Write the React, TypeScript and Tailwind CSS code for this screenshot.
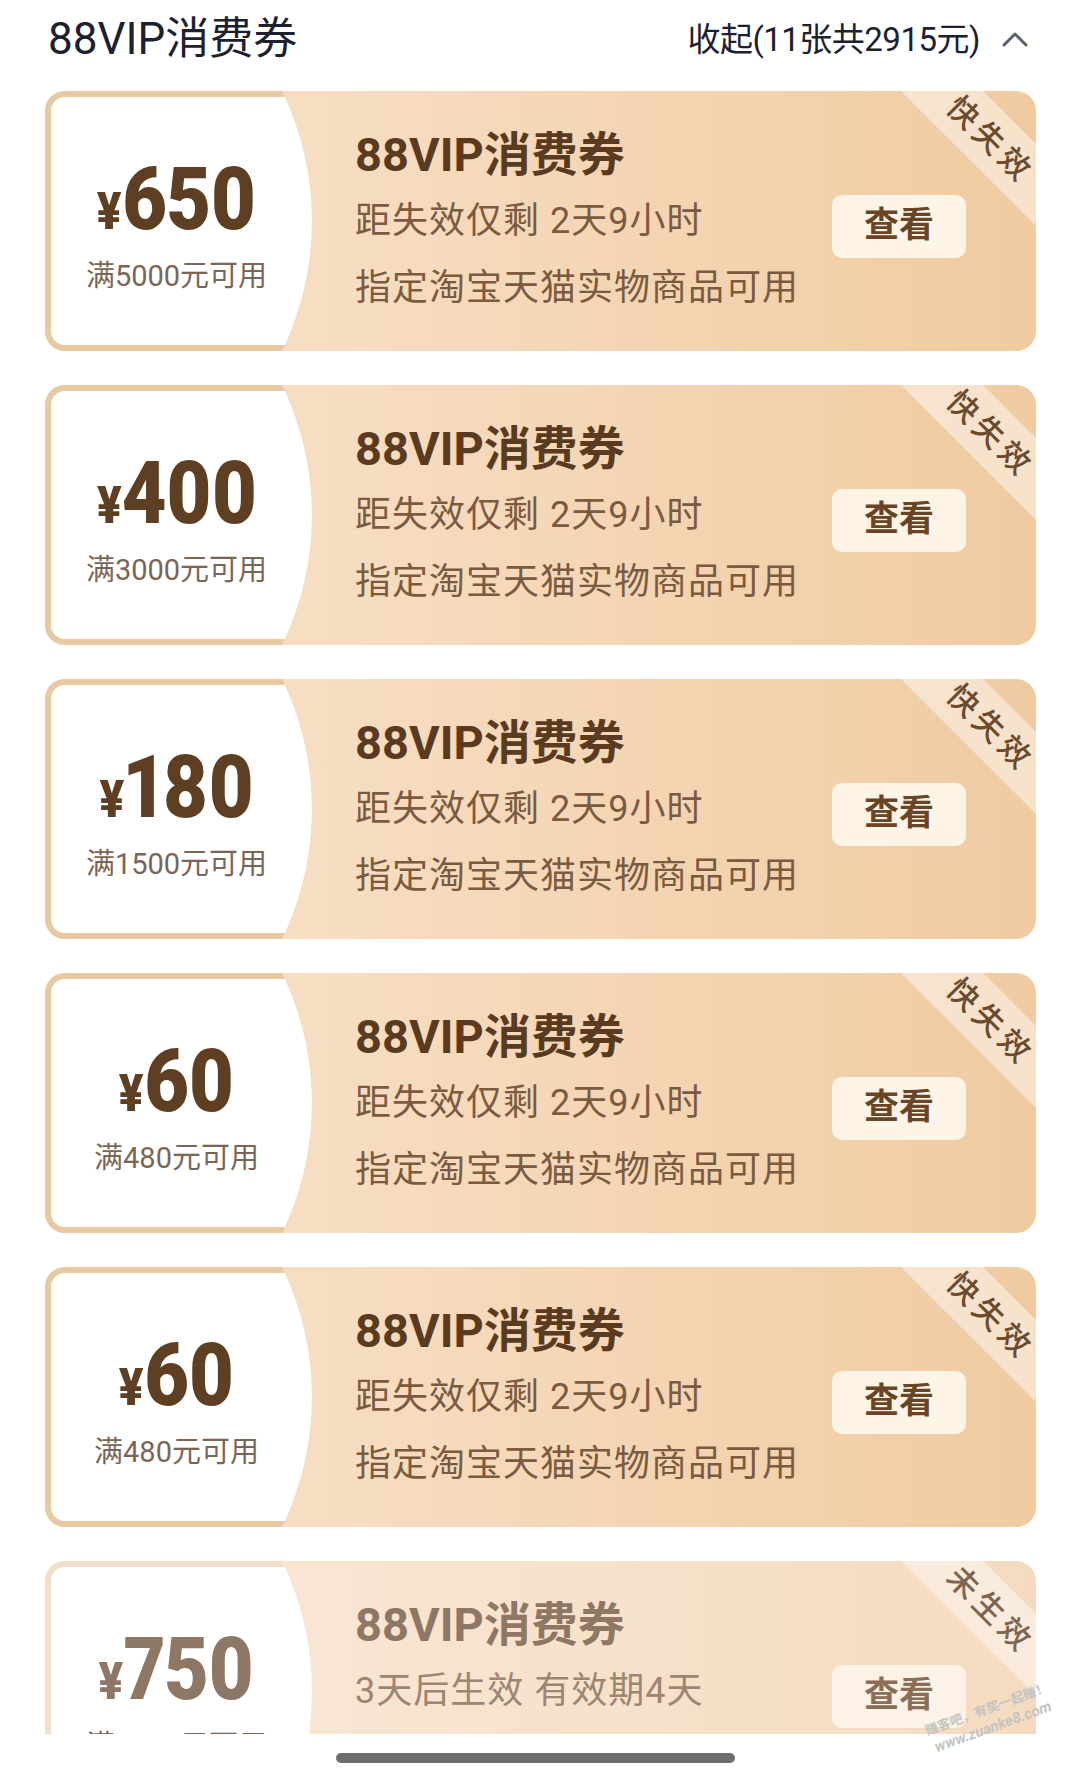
import clsx from 'clsx';

interface Coupon {
  amount: string;
  cond: string;
  line2: string;
  line3: string;
  tag: string;
  pending?: boolean;
}

const coupons: Coupon[] = [
  { amount: '650', cond: '满5000元可用', line2: '距失效仅剩 2天9小时', line3: '指定淘宝天猫实物商品可用', tag: '快失效' },
  { amount: '400', cond: '满3000元可用', line2: '距失效仅剩 2天9小时', line3: '指定淘宝天猫实物商品可用', tag: '快失效' },
  { amount: '180', cond: '满1500元可用', line2: '距失效仅剩 2天9小时', line3: '指定淘宝天猫实物商品可用', tag: '快失效' },
  { amount: '60', cond: '满480元可用', line2: '距失效仅剩 2天9小时', line3: '指定淘宝天猫实物商品可用', tag: '快失效' },
  { amount: '60', cond: '满480元可用', line2: '距失效仅剩 2天9小时', line3: '指定淘宝天猫实物商品可用', tag: '快失效' },
  { amount: '750', cond: '满5000元可用', line2: '3天后生效 有效期4天', line3: '指定淘宝天猫实物商品可用', tag: '未生效', pending: true },
];

const font = "font-['Roboto','Noto_Sans_CJK_SC',sans-serif]";

function CouponCard({ c }: { c: Coupon }) {
  return (
    <div
      className={clsx(
        'relative h-[260px] shrink-0 rounded-[20px] overflow-hidden flex',
        c.pending
          ? 'bg-[linear-gradient(to_right,#f8e6d3_25%,#f4dbc0_100%)]'
          : 'bg-[linear-gradient(to_right,#f7dec3_25%,#f0cba1_100%)]'
      )}
    >
      {/* left amount panel */}
      <div
        className={clsx(
          'w-[267px] h-full shrink-0 pl-[6px] py-[6px] [clip-path:circle(297px_at_-30px_130px)]',
          c.pending ? 'bg-[#f2dfca]' : 'bg-[#e8c9a1]'
        )}
      >
        <div className="h-full rounded-l-[14px] bg-white flex flex-col items-center pt-[58px] pr-[10px]">
          <div
            className={clsx(
              'flex items-baseline font-black leading-[88px] scale-x-[0.88] proportional-nums',
              c.pending ? 'text-[#8e7764]' : 'text-[#5f3f21]'
            )}
          >
            <span className="text-[52px]">¥</span>
            <span className="text-[88px] tracking-[-1px]">{c.amount}</span>
          </div>
          <div className="mt-[3px] text-[29px] leading-[34px] text-[#7a6656]">{c.cond}</div>
        </div>
      </div>

      {/* text */}
      <div className="flex-1 pl-[43px] pt-[30px] flex flex-col">
        <div
          className={clsx(
            'text-[47px] font-bold leading-[67px]',
            c.pending ? 'text-[#8e7764]' : 'text-[#5b3b1f]'
          )}
        >
          88VIP消费券
        </div>
        <div
          className={clsx(
            'text-[36px] leading-[67px] tracking-[1px]',
            c.pending ? 'text-[#9c8572]' : 'text-[#7b5b3f]'
          )}
        >
          {c.line2}
        </div>
        <div className="text-[36px] leading-[67px] tracking-[1px] text-[#7b5b3f]">{c.line3}</div>
      </div>

      {/* button */}
      <div
        className={clsx(
          'self-start mt-[104px] mr-[70px] w-[134px] h-[63px] rounded-[10px] flex items-center justify-center text-[35px] font-bold',
          c.pending ? 'bg-[#fcf2e6] text-[#8a6f58]' : 'bg-[#fdf4e6] text-[#6a4525]'
        )}
      >
        查看
      </div>

      {/* corner ribbon */}
      <div className="absolute left-[834px] top-[18px] w-[220px] h-[58px] rotate-45 bg-white/45 flex items-center justify-center">
        <span
          className={clsx(
            'text-[31px] font-medium leading-none tracking-[5px] pl-[5px]',
            c.pending ? 'text-[#7e6550]' : 'text-[#6b4a2e]'
          )}
        >
          {c.tag}
        </span>
      </div>
    </div>
  );
}

export default function App() {
  return (
    <div className={clsx('relative w-[1080px] h-[1777px] bg-white overflow-hidden', font)}>
      {/* header */}
      <div className="h-[78px] flex items-center justify-between pl-[48px] pr-[52px]">
        <div className="text-[44px] text-[#1c2130] leading-none">88VIP消费券</div>
        <div className="flex items-center gap-[22px]">
          <span className="text-[33px] text-[#1c2130] tracking-[-0.5px] leading-none">收起(11张共2915元)</span>
          <svg width="26" height="16" viewBox="0 0 26 16" fill="none">
            <path d="M2 14 L13 3 L24 14" stroke="#5a6070" strokeWidth="3" strokeLinecap="round" strokeLinejoin="round" />
          </svg>
        </div>
      </div>

      {/* coupon list */}
      <div className="h-[1656px] overflow-hidden pt-[13px] pl-[45px] pr-[44px] flex flex-col gap-[34px]">
        {coupons.map((c, i) => (
          <CouponCard key={i} c={c} />
        ))}
      </div>

      {/* home indicator */}
      <div className="h-[43px] pt-[19px]">
        <div className="ml-[336px] w-[399px] h-[10px] rounded-full bg-[#6e6e6e]" />
      </div>

      {/* watermark */}
      <div className="absolute left-[925px] top-[1700px] -rotate-[20deg] flex flex-col items-center leading-[18px] text-[#c4c4c4] font-bold">
        <span className="text-[13px]">赚客吧，有奖一起赚！</span>
        <span className="text-[15px] italic">www.zuanke8.com</span>
      </div>
    </div>
  );
}
